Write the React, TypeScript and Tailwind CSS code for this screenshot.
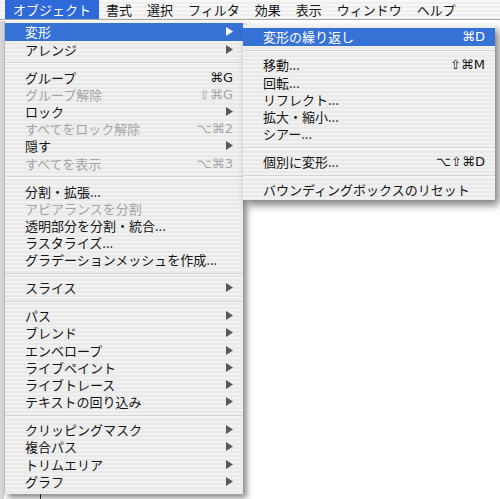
import React from "react";

type Item =
  | { sep: true }
  | {
      sep?: false;
      label: string;
      shortcut?: string;
      sub?: boolean;
      disabled?: boolean;
      active?: boolean;
    };

const mainItems: Item[] = [
  { label: "変形", sub: true, active: true },
  { label: "アレンジ", sub: true },
  { sep: true },
  { label: "グループ", shortcut: "⌘G" },
  { label: "グループ解除", shortcut: "⇧⌘G", disabled: true },
  { label: "ロック", sub: true },
  { label: "すべてをロック解除", shortcut: "⌥⌘2", disabled: true },
  { label: "隠す", sub: true },
  { label: "すべてを表示", shortcut: "⌥⌘3", disabled: true },
  { sep: true },
  { label: "分割・拡張..." },
  { label: "アピアランスを分割", disabled: true },
  { label: "透明部分を分割・統合..." },
  { label: "ラスタライズ..." },
  { label: "グラデーションメッシュを作成..." },
  { sep: true },
  { label: "スライス", sub: true },
  { sep: true },
  { label: "パス", sub: true },
  { label: "ブレンド", sub: true },
  { label: "エンベロープ", sub: true },
  { label: "ライブペイント", sub: true },
  { label: "ライブトレース", sub: true },
  { label: "テキストの回り込み", sub: true },
  { sep: true },
  { label: "クリッピングマスク", sub: true },
  { label: "複合パス", sub: true },
  { label: "トリムエリア", sub: true },
  { label: "グラフ", sub: true },
];

const subItems: Item[] = [
  { label: "変形の繰り返し", shortcut: "⌘D", active: true },
  { sep: true },
  { label: "移動...", shortcut: "⇧⌘M" },
  { label: "回転..." },
  { label: "リフレクト..." },
  { label: "拡大・縮小..." },
  { label: "シアー..." },
  { sep: true },
  { label: "個別に変形...", shortcut: "⌥⇧⌘D" },
  { sep: true },
  { label: "バウンディングボックスのリセット" },
];

function Arrow({ white }: { white?: boolean }) {
  return (
    <svg width="7" height="9" viewBox="0 0 7 9" className="shrink-0">
      <polygon points="0,0 7,4.5 0,9" fill={white ? "#ffffff" : "#585858"} />
    </svg>
  );
}

function Row({ item, pr }: { item: Item; pr: string }) {
  if (item.sep) {
    return (
      <div className="flex h-[10.8px] flex-col justify-center">
        <div className="h-px bg-[#d4d4d4]" />
        <div className="h-px bg-[#f8f8f8]" />
      </div>
    );
  }
  const color = item.active
    ? "bg-[#3671d6] text-white"
    : item.disabled
    ? "text-[#a4a4a4]"
    : "text-[#151515]";
  return (
    <div className={`flex h-[17.2px] items-center pl-[20px] ${pr} ${color}`}>
      <span className="flex-1 whitespace-nowrap leading-none">{item.label}</span>
      {item.shortcut && (
        <span className="whitespace-nowrap font-['DejaVu_Sans',sans-serif] text-[13px] leading-none">
          {item.shortcut}
        </span>
      )}
      {item.sub && <Arrow white={item.active} />}
    </div>
  );
}

const stripes =
  "bg-[repeating-linear-gradient(180deg,#f1f1f1_0px,#f1f1f1_2px,#e9e9e9_2px,#e9e9e9_4px)]";

export default function App() {
  const menus = ["オブジェクト", "書式", "選択", "フィルタ", "効果", "表示", "ウィンドウ", "ヘルプ"];
  return (
    <div className="relative h-[499px] w-[500px] overflow-hidden bg-white font-['Noto_Sans_CJK_JP','DejaVu_Sans',sans-serif] text-[13px]">
      {/* menubar */}
      <div className="flex h-[20px] items-stretch border-b border-[#a8a8a8] bg-[repeating-linear-gradient(180deg,#f7f7f7_0px,#f7f7f7_2px,#eeeeee_2px,#eeeeee_4px)] pl-[5px]">
        {menus.map((m, i) => (
          <div
            key={m}
            className={
              i === 0
                ? "flex items-center bg-[#2f68d8] pl-[8px] pr-[7.5px] text-white"
                : "flex items-center px-[7.5px] text-[#151515]"
            }
          >
            <span className="leading-none">{m}</span>
          </div>
        ))}
      </div>

      {/* canvas background bits */}
      <div className="absolute left-0 top-[21px] h-[478px] w-[4px] bg-[#d6d6d6]" />
      <div className="absolute left-[40px] top-[492px] h-[7px] w-px bg-[#333]" />

      {/* main menu */}
      <div
        className={`absolute left-[4px] top-[21px] w-[239px] border-l border-[#b8b8b8] pb-[4px] pt-[2.4px] shadow-[4px_4px_6px_rgba(0,0,0,0.45)] ${stripes}`}
      >
        {mainItems.map((it, i) => (
          <Row key={i} item={it} pr="pr-[10px]" />
        ))}
      </div>

      {/* submenu */}
      <div
        className={`absolute left-[243px] top-[25px] w-[252px] pb-[2px] pt-[3.4px] shadow-[4px_5px_8px_rgba(0,0,0,0.5)] ${stripes}`}
      >
        {subItems.map((it, i) => (
          <Row key={i} item={it} pr="pr-[10px]" />
        ))}
      </div>
    </div>
  );
}
